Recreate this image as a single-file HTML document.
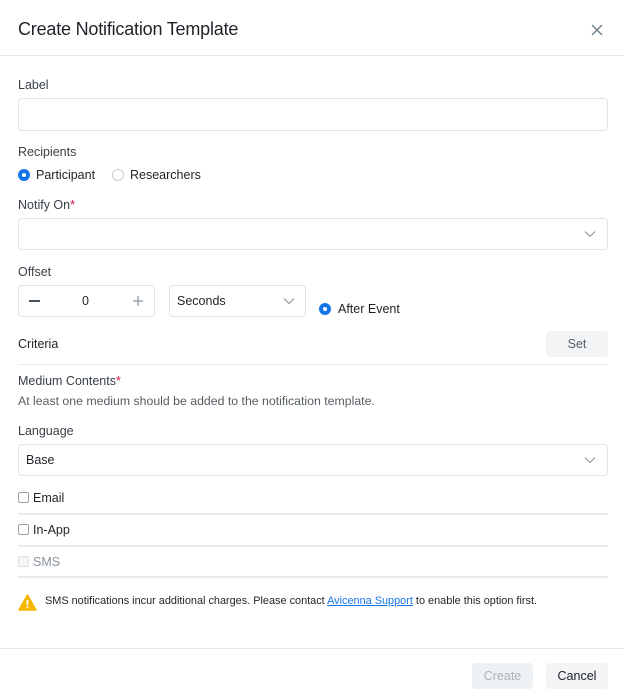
<!DOCTYPE html>
<html><head><meta charset="utf-8"><style>
*{box-sizing:border-box;margin:0;padding:0}
body{width:624px;height:700px;background:#fff;font-family:"Liberation Sans",sans-serif;color:#1f2328;position:relative;overflow:hidden}
.a{position:absolute;white-space:nowrap}
.lbl{font-size:12.5px;color:#3a4149;line-height:14px}
.box{position:absolute;border:1px solid #dfe3e8;border-radius:4px;background:#fff}
.hr{position:absolute;left:18px;width:590px;height:2px;background:#e8ecf0}
.radio{position:absolute;width:12px;height:12px;border-radius:50%}
.on{background:#1676e8;}
.on::after{content:"";position:absolute;left:4px;top:4px;width:4px;height:4px;border-radius:50%;background:#fff}
.off{border:1px solid #c9ced4}
.cb{position:absolute;left:18px;width:11px;height:11px;border:1px solid #9aa3ac;border-radius:2px}
.txt{font-size:12.5px;color:#1f2328;line-height:14px}
.btn{position:absolute;border-radius:4px;font-size:12.5px;text-align:center;line-height:26px}
</style></head><body>
<div class="a" style="left:18px;top:19px;font-size:18px;color:#1f2328;letter-spacing:-0.2px">Create Notification Template</div>
<svg class="a" style="left:591px;top:24px" width="12" height="12" viewBox="0 0 12 12"><path d="M1 1L11 11M11 1L1 11" stroke="#6b7f8c" stroke-width="1.4"/></svg>
<div class="a" style="left:0;top:55px;width:624px;height:1px;background:#e6eaee"></div>

<div class="a lbl" style="left:18px;top:78px">Label</div>
<div class="box" style="left:18px;top:98px;width:590px;height:33px"></div>

<div class="a lbl" style="left:18px;top:145px">Recipients</div>
<div class="radio on" style="left:18px;top:169px"></div>
<div class="a txt" style="left:36px;top:168px">Participant</div>
<div class="radio off" style="left:112px;top:169px"></div>
<div class="a txt" style="left:130px;top:168px">Researchers</div>

<div class="a lbl" style="left:18px;top:198px">Notify On<span style="color:#d0103a">*</span></div>
<div class="box" style="left:18px;top:218px;width:590px;height:32px"></div>
<svg class="a" style="left:584px;top:230px" width="12" height="8" viewBox="0 0 12 8"><path d="M1 1.5L6 6.5L11 1.5" fill="none" stroke="#8a949d" stroke-width="1.1"/></svg>

<div class="a lbl" style="left:18px;top:265px">Offset</div>
<div class="box" style="left:18px;top:285px;width:137px;height:32px"></div>
<div class="a" style="left:29px;top:300px;width:11px;height:1.6px;background:#4a535c"></div>
<div class="a txt" style="left:82px;top:294px">0</div>
<svg class="a" style="left:132px;top:295px" width="12" height="12" viewBox="0 0 12 12"><path d="M6 1V11M1 6H11" stroke="#8a949d" stroke-width="1.2"/></svg>
<div class="box" style="left:169px;top:285px;width:137px;height:32px"></div>
<div class="a txt" style="left:177px;top:294px">Seconds</div>
<svg class="a" style="left:283px;top:297px" width="12" height="8" viewBox="0 0 12 8"><path d="M1 1.5L6 6.5L11 1.5" fill="none" stroke="#8a949d" stroke-width="1.1"/></svg>
<div class="radio on" style="left:319px;top:303px"></div>
<div class="a txt" style="left:338px;top:302px">After Event</div>

<div class="a txt" style="left:18px;top:337px">Criteria</div>
<div class="btn" style="left:546px;top:331px;width:62px;height:26px;background:#f3f4f5;color:#555d64">Set</div>
<div class="hr" style="top:364px;height:1px"></div>

<div class="a lbl" style="left:18px;top:374px">Medium Contents<span style="color:#d0103a">*</span></div>
<div class="a" style="left:18px;top:394px;font-size:12.3px;color:#555d64">At least one medium should be added to the notification template.</div>

<div class="a lbl" style="left:18px;top:424px">Language</div>
<div class="box" style="left:18px;top:444px;width:590px;height:32px"></div>
<div class="a txt" style="left:26px;top:453px">Base</div>
<svg class="a" style="left:584px;top:456px" width="12" height="8" viewBox="0 0 12 8"><path d="M1 1.5L6 6.5L11 1.5" fill="none" stroke="#8a949d" stroke-width="1.1"/></svg>

<div class="cb" style="top:492px"></div>
<div class="a txt" style="left:33px;top:491px">Email</div>
<div class="hr" style="top:513px"></div>
<div class="cb" style="top:524px"></div>
<div class="a txt" style="left:33px;top:523px">In-App</div>
<div class="hr" style="top:545px"></div>
<div class="cb" style="top:556px;border-color:#dde1e5;background:#f4f5f6"></div>
<div class="a txt" style="left:33px;top:555px;color:#8a939b">SMS</div>
<div class="hr" style="top:576px"></div>

<svg class="a" style="left:18px;top:594px" width="19" height="17" viewBox="0 0 19 17"><path d="M9.5 1L18 16H1Z" fill="#f5b800" stroke="#f5b800" stroke-linejoin="round" stroke-width="1.5"/><path d="M9.5 6V11" stroke="#fff" stroke-width="1.8"/><circle cx="9.5" cy="13.3" r="1" fill="#fff"/></svg>
<div class="a" style="left:45px;top:595px;font-size:10.9px;color:#1f2328">SMS notifications incur additional charges. Please contact <span style="color:#1676e8;text-decoration:underline">Avicenna Support</span> to enable this option first.</div>

<div class="a" style="left:0;top:648px;width:624px;height:1px;background:#e6eaee"></div>
<div class="btn" style="left:472px;top:663px;width:61px;height:26px;background:#eef1f4;color:#a9b2ba">Create</div>
<div class="btn" style="left:546px;top:663px;width:62px;height:26px;background:#f3f4f5;color:#1f2328">Cancel</div>
</body></html>
